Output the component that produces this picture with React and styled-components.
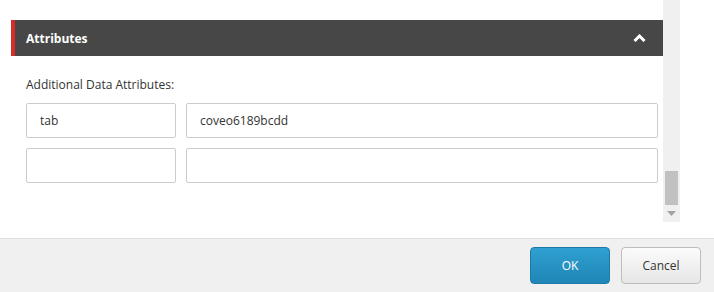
import React from 'react';
import styled, { createGlobalStyle } from 'styled-components';

const GlobalStyle = createGlobalStyle`
  html, body {
    margin: 0;
    padding: 0;
    background: #ffffff;
    font-family: "Open Sans", "Noto Sans", sans-serif;
  }
`;

const Page = styled.div`
  width: 714px;
  height: 292px;
  display: flex;
  flex-direction: column;
  overflow: hidden;
`;

const ScrollArea = styled.div`
  height: 238px;
  display: flex;
  align-items: flex-start;
`;

const Content = styled.div`
  width: 652px;
  padding: 20px 0 0 11px;
`;

const SectionHeader = styled.div`
  height: 36px;
  display: flex;
  align-items: center;
  justify-content: space-between;
  background: #474747;
  border-left: 4px solid #d72b27;
  padding: 0 17px 0 11px;
  color: #ffffff;
  font-size: 12px;
  font-weight: 700;
`;

const SectionBody = styled.div`
  padding: 21px 0 0 15px;
`;

const Label = styled.div`
  font-size: 12px;
  line-height: 16px;
  color: #333333;
  margin-bottom: 10px;
`;

const Grid = styled.div`
  display: grid;
  grid-template-columns: 150px 472px;
  column-gap: 10px;
  row-gap: 10px;
`;

const Field = styled.input`
  box-sizing: border-box;
  height: 35px;
  width: 100%;
  border: 1px solid #cccccc;
  border-radius: 2px;
  padding: 0 13px;
  font-family: inherit;
  font-size: 12px;
  color: #333333;
  background: #ffffff;
  outline: none;
`;

const Scrollbar = styled.div`
  width: 17px;
  height: 222px;
  background: #f0f0f0;
  display: flex;
  flex-direction: column;
  align-items: center;
  justify-content: flex-end;
`;

const Thumb = styled.div`
  width: 13px;
  height: 34px;
  background: #c1c1c1;
`;

const Arrow = styled.div`
  height: 17px;
  display: flex;
  align-items: center;
  justify-content: center;
`;

const Footer = styled.div`
  flex: 1;
  background: #f0f0f0;
  border-top: 1px solid #dddddd;
  display: flex;
  justify-content: flex-end;
  align-items: flex-start;
  gap: 11px;
  padding: 8px 13px 0 0;
`;

const Button = styled.button`
  box-sizing: border-box;
  width: 80px;
  height: 37px;
  border-radius: 4px;
  font-family: inherit;
  font-size: 12px;
  cursor: pointer;
  border: 1px solid ${p => (p.primary ? '#1d7aa6' : '#bdbdbd')};
  color: ${p => (p.primary ? '#ffffff' : '#333333')};
  background: ${p =>
    p.primary
      ? 'linear-gradient(#2ea0d1, #1f86b6)'
      : 'linear-gradient(#fbfbfb, #e6e6e6)'};
`;

const ChevronUp = () => (
  <svg width="13" height="8" viewBox="0 0 13 8">
    <polyline points="1.5,7 6.5,2 11.5,7" fill="none" stroke="#ffffff" strokeWidth="3" strokeLinejoin="miter" />
  </svg>
);

const rows = [
  ['tab', 'coveo6189bcdd'],
  ['', ''],
];

export default function App() {
  return (
    <Page>
      <GlobalStyle />
      <ScrollArea>
        <Content>
          <SectionHeader>
            <span>Attributes</span>
            <ChevronUp />
          </SectionHeader>
          <SectionBody>
            <Label>Additional Data Attributes:</Label>
            <Grid>
              {rows.map((r, i) => (
                <React.Fragment key={i}>
                  <Field defaultValue={r[0]} />
                  <Field defaultValue={r[1]} />
                </React.Fragment>
              ))}
            </Grid>
          </SectionBody>
        </Content>
        <Scrollbar>
          <Thumb />
          <Arrow>
            <svg width="9" height="5" viewBox="0 0 9 5">
              <polygon points="0,0 9,0 4.5,5" fill="#a3a3a3" />
            </svg>
          </Arrow>
        </Scrollbar>
      </ScrollArea>
      <Footer>
        <Button primary>OK</Button>
        <Button>Cancel</Button>
      </Footer>
    </Page>
  );
}
